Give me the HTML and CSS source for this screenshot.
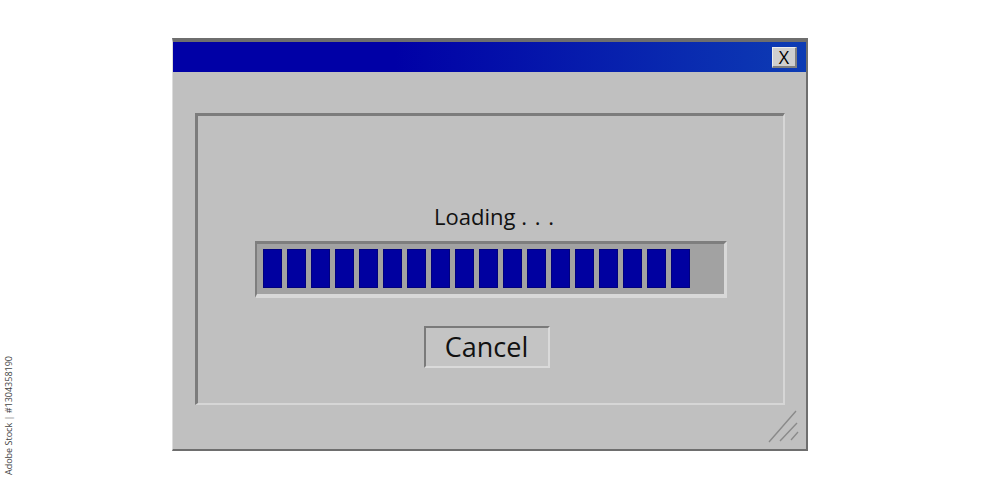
FILE: index.html
```html
<!DOCTYPE html>
<html lang="en">
<head>
    <meta charset="UTF-8">
    <meta name="viewport" content="width=device-width, initial-scale=1.0">
    <title>Loading</title>
    <link rel="stylesheet" href="styles.css">
</head>
<body>
    <div class="window">
        <div class="title-bar">
            <button class="close-btn" type="button">X</button>
        </div>
        <div class="window-body">
            <div class="groove">
                <div class="loading-text">Loading <span class="dots">. . .</span></div>
                <div class="progress">
                    <span class="block"></span><span class="block"></span><span class="block"></span>
                    <span class="block"></span><span class="block"></span><span class="block"></span>
                    <span class="block"></span><span class="block"></span><span class="block"></span>
                    <span class="block"></span><span class="block"></span><span class="block"></span>
                    <span class="block"></span><span class="block"></span><span class="block"></span>
                    <span class="block"></span><span class="block"></span><span class="block"></span>
                </div>
                <button class="cancel-btn" type="button">Cancel</button>
            </div>
            <svg class="grip" width="34" height="34" viewBox="0 0 34 34">
                <line x1="29" y1="1" x2="2" y2="32" stroke="#8a8a8a" stroke-width="1.4"/>
                <line x1="30" y1="13" x2="13" y2="31" stroke="#8a8a8a" stroke-width="1.4"/>
                <line x1="31" y1="22" x2="24" y2="30" stroke="#8a8a8a" stroke-width="1.4"/>
            </svg>
        </div>
    </div>
    <div class="stock-id">Adobe Stock | #1304358190</div>
</body>
</html>
```

FILE: styles.css
```css
body {
    margin: 0;
    padding: 0;
    background: #ffffff;
    font-family: "Open Sans", Arial, sans-serif;
    height: 486px;
    overflow: hidden;
    position: relative;
}
.window {
    margin: 38px 0 0 172px;
    width: 636px;
    height: 413px;
    box-sizing: border-box;
    background: #c0c0c0;
    border-top: 4px solid #6e6e6e;
    border-left: 1px solid #dcdcdc;
    border-right: 2px solid #6e6e6e;
    border-bottom: 2px solid #6e6e6e;
    display: flex;
    flex-direction: column;
}
.title-bar {
    height: 30px;
    background: linear-gradient(to right, #0000a6 0%, #0000a6 35%, #0d3cb4 100%);
    display: flex;
    justify-content: flex-end;
    align-items: center;
    padding-right: 9px;
}
.close-btn {
    width: 25px;
    height: 21px;
    padding: 0;
    background: #cfcfcf;
    border-top: 1px solid #ececec;
    border-left: 1px solid #ececec;
    border-right: 2px solid #808080;
    border-bottom: 2px solid #808080;
    font-family: "Open Sans", Arial, sans-serif;
    font-size: 18px;
    line-height: 18px;
    color: #000000;
}
.window-body {
    flex: 1;
    position: relative;
    padding: 41px 21px 44px 22px;
    display: flex;
}
.groove {
    flex: 1;
    border-top: 3px solid #7c7c7c;
    border-left: 3px solid #7c7c7c;
    border-right: 2px solid #d6d6d6;
    border-bottom: 2px solid #d6d6d6;
    display: flex;
    flex-direction: column;
    align-items: center;
    padding-top: 85px;
}
.loading-text {
    font-size: 22px;
    line-height: 30px;
    color: #111111;
    margin-left: 8px;
}
.dots {
    letter-spacing: 1px;
}
.progress {
    margin-top: 10px;
    box-sizing: border-box;
    width: 472px;
    height: 57px;
    background: #a2a2a2;
    border-top: 3px solid #7e7e7e;
    border-left: 2px solid #7e7e7e;
    border-right: 3px solid #d8d8d8;
    border-bottom: 4px solid #d8d8d8;
    padding: 5px 0 6px 6px;
    display: flex;
    gap: 5px;
}
.block {
    width: 19px;
    background: #0000a0;
    box-shadow: inset 0 0 0 1px #00007e;
}
.cancel-btn {
    margin-top: 28px;
    width: 126px;
    height: 42px;
    margin-right: 8px;
    background: #c4c4c4;
    border-top: 2px solid #7a7a7a;
    border-left: 2px solid #7a7a7a;
    border-right: 2px solid #dadada;
    border-bottom: 2px solid #dadada;
    font-family: "Open Sans", Arial, sans-serif;
    font-size: 27px;
    line-height: 36px;
    color: #111111;
    padding: 0;
}
.grip {
    position: absolute;
    right: 5px;
    bottom: 5px;
}
.stock-id {
    position: absolute;
    left: 3px;
    top: 356px;
    writing-mode: vertical-rl;
    transform: rotate(180deg);
    white-space: nowrap;
    font-family: "Open Sans", Arial, sans-serif;
    font-size: 9px;
    color: #444444;
    line-height: 12px;
}
```
